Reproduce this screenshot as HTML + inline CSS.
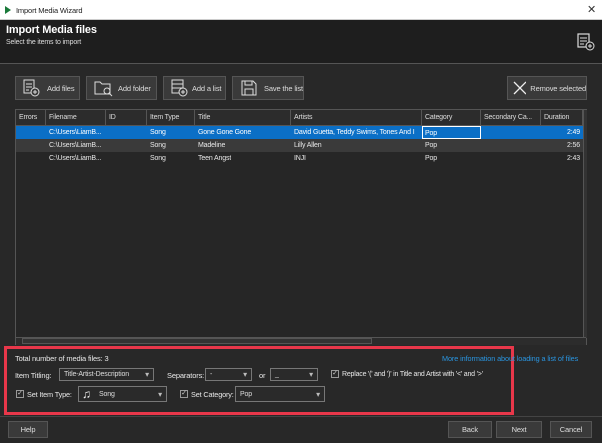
<!DOCTYPE html><html><head><style>
*{box-sizing:border-box;margin:0;padding:0;white-space:nowrap}
body{width:602px;height:443px;background:#282828;font-family:"Liberation Sans",sans-serif;font-size:7.5px;letter-spacing:-0.15px;color:#e8e8e8;position:relative;overflow:hidden}
.a{position:absolute}
.btn{position:absolute;background:#3a3a3a;border:1px solid #555;color:#ddd;display:flex;align-items:center;font-size:7.5px}
.th{position:absolute;top:0;height:16px;line-height:16px;padding-left:3px;border-right:1px solid #555;font-size:7px;color:#ddd;overflow:hidden}
.row{position:absolute;left:0;width:567px;height:13px;line-height:13px;font-size:7px}
.row span{position:absolute;top:0;overflow:hidden}
.dd{position:absolute;background:#2a2a2a;border:1px solid #777;height:13px;line-height:12px;padding-left:4px;font-size:7px;color:#ddd}
.dd:after{content:"▾";position:absolute;right:4px;top:0;font-size:8px;color:#bbb}
.cb{position:absolute;width:8px;height:8px;border:1px solid #999;font-size:7px;line-height:6px;text-align:center;color:#ccc}
</style></head><body>
<div class="a" style="left:0;top:0;width:602px;height:20px;background:#fff;border-bottom:1px solid #ccc"></div>
<div class="a" style="left:5px;top:6px;width:0;height:0;border-left:6px solid #1a7a3a;border-top:4px solid transparent;border-bottom:4px solid transparent"></div>
<div class="a" style="left:16px;top:6px;color:#222;font-size:7.5px">Import Media Wizard</div>
<div class="a" style="left:587px;top:3px;color:#333;font-size:11px">✕</div>
<div class="a" style="left:0;top:20px;width:602px;height:43px;background:#1e1e1e"></div>
<div class="a" style="left:6px;top:24px;font-size:11px;font-weight:bold;color:#fff">Import Media files</div>
<div class="a" style="left:6px;top:39px;font-size:7px;color:#ddd">Select the items to import</div>
<svg class="a" style="left:577px;top:33px" width="18" height="18"><rect x="1" y="1" width="11" height="13" fill="none" stroke="#ddd" stroke-width="1.2"/><path d="M3 5h7M3 8h7M3 11h4" stroke="#ddd"/><circle cx="13" cy="13" r="4" fill="#1e1e1e" stroke="#ddd"/><path d="M13 11v4M11 13h4" stroke="#ddd"/></svg>
<div class="a" style="left:0;top:63px;width:602px;height:1px;background:#555"></div>

<div class="btn" style="left:15px;top:76px;width:65px;height:24px"><svg width="22" height="20" style="margin-left:6px"><rect x="2" y="2" width="10" height="13" fill="none" stroke="#ddd"/><path d="M4 6h6M4 9h6M4 12h3" stroke="#ddd"/><circle cx="13" cy="14" r="4" fill="#3a3a3a" stroke="#ddd"/><path d="M13 12v4M11 14h4" stroke="#ddd"/></svg><span style="margin-left:3px">Add files</span></div>
<div class="btn" style="left:86px;top:76px;width:71px;height:24px"><svg width="22" height="20" style="margin-left:6px"><path d="M2 4h5l2 2h8v10H2z" fill="none" stroke="#ddd"/><circle cx="14" cy="13" r="3" fill="#3a3a3a" stroke="#ddd"/><path d="M16 15l3 3" stroke="#ddd"/></svg><span style="margin-left:3px">Add folder</span></div>
<div class="btn" style="left:163px;top:76px;width:63px;height:24px"><svg width="22" height="20" style="margin-left:6px"><rect x="2" y="2" width="11" height="13" fill="none" stroke="#ddd"/><path d="M2 6h11M2 10h11" stroke="#ddd"/><circle cx="13" cy="14" r="4" fill="#3a3a3a" stroke="#ddd"/><path d="M13 12v4M11 14h4" stroke="#ddd"/></svg><span>Add a list</span></div>
<div class="btn" style="left:232px;top:76px;width:72px;height:24px"><svg width="22" height="20" style="margin-left:6px"><path d="M3 3h11l3 3v11H3z" fill="none" stroke="#ddd"/><rect x="6" y="3" width="7" height="4" fill="none" stroke="#ddd"/><rect x="6" y="11" width="8" height="6" fill="none" stroke="#ddd"/></svg><span style="margin-left:3px">Save the list</span></div>
<div class="btn" style="left:507px;top:76px;width:80px;height:24px"><svg width="18" height="18" style="margin-left:3px"><path d="M3 3l12 12M15 3L3 15" stroke="#eee" stroke-width="1.3"/></svg><span style="margin-left:4px">Remove selected</span></div>

<div class="a" style="left:15px;top:109px;width:572px;height:236px;background:#262626;border:1px solid #555">
<div class="a" style="left:0;top:0;width:567px;height:16px;background:#2c2c2c;border-bottom:1px solid #555"></div>
<div class="th" style="left:0;width:30px">Errors</div>
<div class="th" style="left:30px;width:60px">Filename</div>
<div class="th" style="left:90px;width:41px">ID</div>
<div class="th" style="left:131px;width:48px">Item Type</div>
<div class="th" style="left:179px;width:96px">Title</div>
<div class="th" style="left:275px;width:131px">Artists</div>
<div class="th" style="left:406px;width:59px">Category</div>
<div class="th" style="left:465px;width:60px">Secondary Ca...</div>
<div class="th" style="left:525px;width:42px">Duration</div>
<div class="a" style="left:567px;top:0;width:4px;height:228px;background:#333;border-left:1px solid #555"></div>
<div class="row" style="top:16px;background:#0b6fc6;color:#fff"><span style="left:33px">C:\Users\LiamB...</span><span style="left:134px">Song</span><span style="left:182px">Gone Gone Gone</span><span style="left:278px;width:127px">David Guetta, Teddy Swims, Tones And I</span><span style="left:406px;width:59px;height:13px;border:1px solid #fff;background:#0b6fc6;padding-left:2px">Pop</span><span style="right:3px">2:49</span></div>
<div class="row" style="top:29px;background:#3a3a3a"><span style="left:33px">C:\Users\LiamB...</span><span style="left:134px">Song</span><span style="left:182px">Madeline</span><span style="left:278px">Lilly Allen</span><span style="left:409px">Pop</span><span style="right:3px">2:56</span></div>
<div class="row" style="top:42px;background:#262626"><span style="left:33px">C:\Users\LiamB...</span><span style="left:134px">Song</span><span style="left:182px">Teen Angst</span><span style="left:278px">INJI</span><span style="left:409px">Pop</span><span style="right:3px">2:43</span></div>
<div class="a" style="left:0;top:227px;width:570px;height:8px;background:#2c2c2c;border-top:1px solid #555"></div>
<div class="a" style="left:6px;top:228px;width:350px;height:6px;border:1px solid #555;background:#333"></div>
</div>

<div class="a" style="left:4px;top:346px;width:510px;height:69px;border:3px solid #e8374a"></div>
<div class="a" style="left:15px;top:354px">Total number of media files: 3</div>
<div class="a" style="left:442px;top:354px;color:#2a95e0;letter-spacing:-0.1px;font-size:7.3px">More information about loading a list of files</div>
<div class="a" style="left:15px;top:371px">Item Titling:</div>
<div class="dd" style="left:59px;top:368px;width:95px">Title-Artist-Description</div>
<div class="a" style="left:167px;top:371px">Separators:</div>
<div class="dd" style="left:205px;top:368px;width:47px">-</div>
<div class="a" style="left:259px;top:371px">or</div>
<div class="dd" style="left:270px;top:368px;width:48px">_</div>
<div class="cb" style="left:331px;top:370px">✓</div>
<div class="a" style="left:342px;top:371px;font-size:7px;letter-spacing:-0.2px">Replace '(' and ')' in Title and Artist with '&lt;' and '&gt;'</div>
<div class="cb" style="left:16px;top:390px">✓</div>
<div class="a" style="left:27px;top:390px;font-size:7.3px">Set Item Type:</div>
<div class="dd" style="left:78px;top:386px;width:89px;height:16px;line-height:15px;padding-left:20px">Song</div>
<div class="a" style="left:82px;top:387px;font-size:12px;color:#eee">♫</div>
<div class="cb" style="left:180px;top:390px">✓</div>
<div class="a" style="left:191px;top:390px;font-size:7.3px">Set Category:</div>
<div class="dd" style="left:235px;top:386px;width:90px;height:16px;line-height:15px">Pop</div>

<div class="a" style="left:0;top:416px;width:602px;height:1px;background:#444"></div>
<div class="btn" style="left:8px;top:421px;width:40px;height:17px;justify-content:center">Help</div>
<div class="btn" style="left:448px;top:421px;width:44px;height:17px;justify-content:center">Back</div>
<div class="btn" style="left:496px;top:421px;width:46px;height:17px;justify-content:center">Next</div>
<div class="btn" style="left:550px;top:421px;width:42px;height:17px;justify-content:center">Cancel</div>
</body></html>
